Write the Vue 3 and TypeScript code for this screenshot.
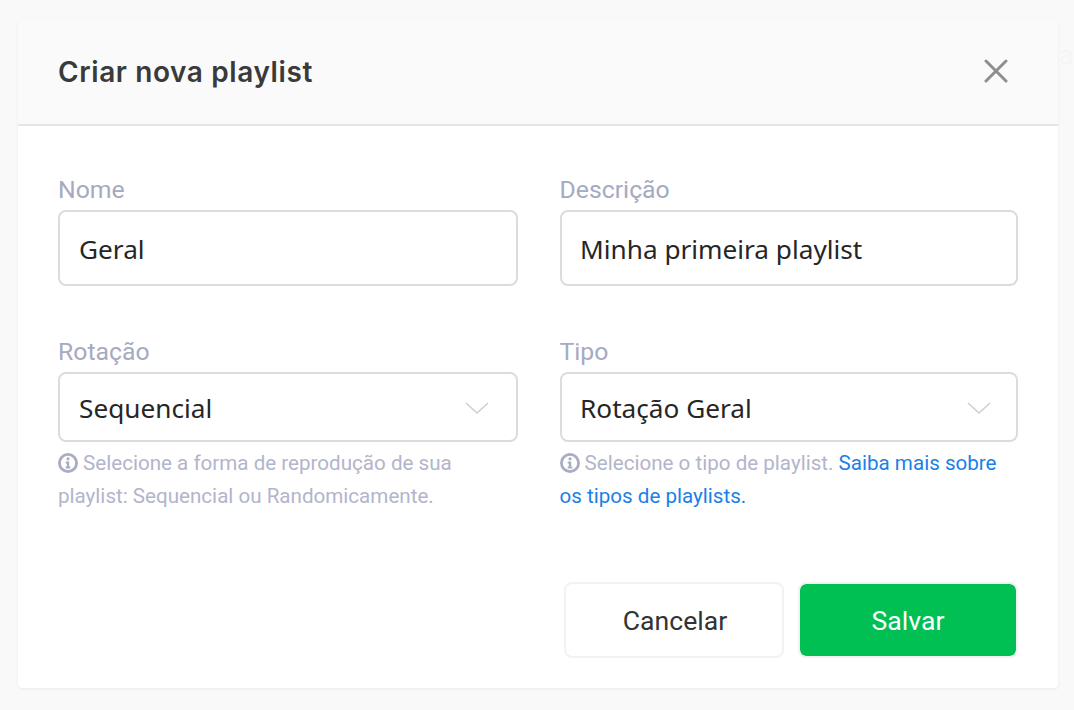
<template>
  <div class="page">
    <span class="behind">a</span>
    <section class="modal">
      <header class="modal-header">
        <h2>Criar nova playlist</h2>
        <button class="close-btn" aria-label="Fechar">
          <svg width="24" height="24" viewBox="0 0 24 24"><path d="M2 2 22 22M22 2 2 22" /></svg>
        </button>
      </header>

      <div class="modal-body">
        <div class="form-grid">
          <div class="field">
            <label>Nome</label>
            <div class="control input">Geral</div>
          </div>
          <div class="field right">
            <label>Descrição</label>
            <div class="control input">Minha primeira playlist</div>
          </div>
          <div class="field">
            <label>Rotação</label>
            <div class="control select">
              Sequencial
              <svg class="chevron" width="24" height="14" viewBox="0 0 24 14"><path d="M1 2 12 12 23 2" /></svg>
            </div>
            <p class="hint">
              <svg class="info" width="20" height="20" viewBox="0 0 20 20">
                <circle cx="10" cy="10" r="8.6" />
                <path d="M10 4.2a1.6 1.6 0 1 1 0 3.2 1.6 1.6 0 0 1 0-3.2ZM7.7 8.4h3.5v5.2h1.1v2H7.7v-2h1.1v-3.2H7.7Z" />
              </svg>
              Selecione a forma de reprodução de sua playlist: Sequencial ou Randomicamente.
            </p>
          </div>
          <div class="field right">
            <label>Tipo</label>
            <div class="control select">
              Rotação Geral
              <svg class="chevron" width="24" height="14" viewBox="0 0 24 14"><path d="M1 2 12 12 23 2" /></svg>
            </div>
            <p class="hint">
              <svg class="info" width="20" height="20" viewBox="0 0 20 20">
                <circle cx="10" cy="10" r="8.6" />
                <path d="M10 4.2a1.6 1.6 0 1 1 0 3.2 1.6 1.6 0 0 1 0-3.2ZM7.7 8.4h3.5v5.2h1.1v2H7.7v-2h1.1v-3.2H7.7Z" />
              </svg>
              Selecione o tipo de playlist. <a href="#">Saiba mais sobre os tipos de playlists.</a>
            </p>
          </div>
        </div>

        <footer class="actions">
          <button class="btn btn-cancel">Cancelar</button>
          <button class="btn btn-save">Salvar</button>
        </footer>
      </div>
    </section>
  </div>
</template>

<script setup lang="ts">
</script>

<style>
html, body { background: #f9f9f9; }
</style>

<style scoped>
.page {
  position: relative;
  height: 710px;
  box-sizing: border-box;
  padding: 20px 16px 22px 18px;
  background: #f9f9f9;
  overflow: hidden;
}
/* page text dimmed behind the modal */
.behind {
  position: absolute;
  left: 1059px;
  top: 40px;
  font-family: Roboto, sans-serif;
  font-size: 26px;
  line-height: 30px;
  color: #f5f5f5;
}
.modal {
  position: relative;
  height: 668px;
  background: #fff;
  border-radius: 4px;
  box-shadow: 0 1px 3px rgba(0,0,0,0.07);
  overflow: hidden;
}
.modal-header {
  height: 106px;
  box-sizing: border-box;
  display: flex;
  align-items: center;
  justify-content: space-between;
  padding: 0 50px 2px 40px;
  background: #fafafa;
  border-bottom: 2px solid #e6e6e6;
}
h2 {
  margin: 2px 0 0;
  font-family: Inter, sans-serif;
  font-size: 28px;
  font-weight: 600;
  letter-spacing: 0.6px;
  color: #3a3a3a;
}
.close-btn {
  display: flex;
  padding: 0;
  border: 0;
  background: none;
}
.close-btn path { fill: none; stroke: #8e8e8e; stroke-width: 3; stroke-linecap: round; }
.modal-body { padding: 46px 40px 0; }
.form-grid {
  display: grid;
  grid-template-columns: 460px 458px;
  column-gap: 42px;
  row-gap: 48px;
}
.field label {
  display: block;
  height: 38px;
  font-family: Roboto, sans-serif;
  font-size: 24.8px;
  line-height: 36px;
  color: #a6aac1;
}
.right label, .right .hint { margin-left: -0.5px; }
.control {
  box-sizing: border-box;
  display: flex;
  align-items: center;
  justify-content: space-between;
  border: 2px solid #dcdcdc;
  border-radius: 8px;
  padding: 2px 27px 0 19px;
  font-family: "Noto Sans", sans-serif;
  font-size: 26.2px;
  color: #262626;
  background: #fff;
}
.right .control { padding-left: 18px; padding-right: 25px; }
.input { height: 76px; }
.select { height: 70px; }
.chevron path { fill: none; stroke: #cfcfcf; stroke-width: 1.6; }
.hint {
  margin: 5px 0 0;
  font-family: Roboto, sans-serif;
  font-size: 20.6px;
  line-height: 33px;
  color: #b2b5cb;
}
.info { vertical-align: -3px; }
.info circle { fill: none; stroke: #a9adc2; stroke-width: 2.8; }
.info path { fill: #a9adc2; }
.hint a { color: #1a7fe8; text-decoration: none; }
.actions {
  display: flex;
  justify-content: flex-end;
  gap: 14px;
  margin-top: 69px;
}
.btn {
  width: 220px;
  height: 76px;
  box-sizing: border-box;
  border: 2px solid #f2f2f2;
  border-radius: 8px;
  font-family: Roboto, sans-serif;
  font-size: 26.6px;
  cursor: pointer;
}
.btn-cancel { background: #fff; color: #333; padding-left: 8px; }
.btn-save { background: #00bf53; background-clip: padding-box; color: #fff; }
</style>
